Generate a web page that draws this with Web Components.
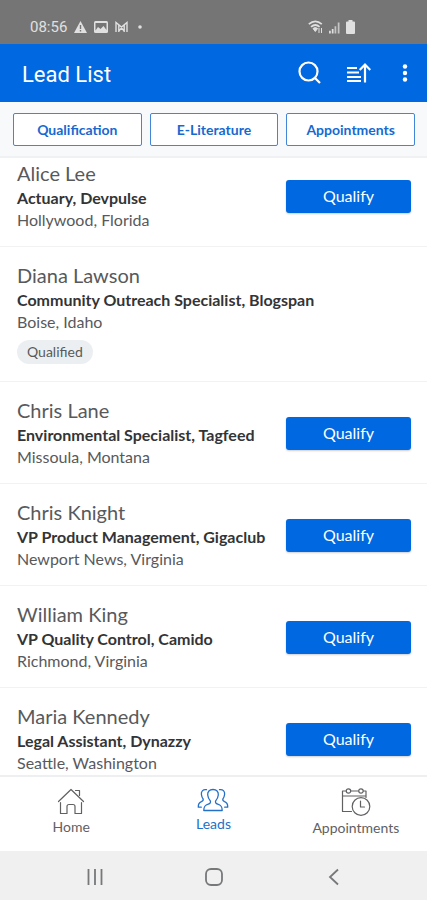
<!DOCTYPE html>
<html lang="en">
<head>
<meta charset="utf-8">
<meta name="viewport" content="width=device-width, initial-scale=1">
<title>Lead List</title>
<style>
html, body { margin: 0; height: 100%; }
body { font-family: Lato, "Open Sans", sans-serif; color: #58595b; background: #fff; --blue: #0068e0; }
</style>
</head>
<body>
<lead-app>
  <status-bar slot="top">08:56</status-bar>
  <app-bar slot="top">Lead List</app-bar>
  <filter-bar slot="top">
    <filter-button>Qualification</filter-button>
    <filter-button>E-Literature</filter-button>
    <filter-button>Appointments</filter-button>
  </filter-bar>
  <lead-list>
    <lead-row><span slot="name">Alice Lee</span><span slot="role">Actuary, Devpulse</span><span slot="place">Hollywood, Florida</span></lead-row>
    <lead-row qualified><span slot="name">Diana Lawson</span><span slot="role">Community Outreach Specialist, Blogspan</span><span slot="place">Boise, Idaho</span></lead-row>
    <lead-row><span slot="name">Chris Lane</span><span slot="role">Environmental Specialist, Tagfeed</span><span slot="place">Missoula, Montana</span></lead-row>
    <lead-row><span slot="name">Chris Knight</span><span slot="role">VP Product Management, Gigaclub</span><span slot="place">Newport News, Virginia</span></lead-row>
    <lead-row><span slot="name">William King</span><span slot="role">VP Quality Control, Camido</span><span slot="place">Richmond, Virginia</span></lead-row>
    <lead-row><span slot="name">Maria Kennedy</span><span slot="role">Legal Assistant, Dynazzy</span><span slot="place">Seattle, Washington</span></lead-row>
  </lead-list>
  <tab-bar slot="bottom">
    <tab-item href="#home">
      <svg slot="icon" width="28" height="27" viewBox="0 0 28 27" fill="none" stroke="currentColor" stroke-width="1.2" stroke-linejoin="round" stroke-linecap="round"><path d="M1.5 13.5 14 1.5l12.500 12M3.500 14.500V25.500h6.500v-7q0-2 2-2h4q2 0 2 2v7h6.500V14.500M18.500 2.500h4v5"/></svg>
      Home
    </tab-item>
    <tab-item href="#leads" active>
      <svg slot="icon" width="32" height="24" viewBox="0 0 32 24" fill="none" stroke="currentColor" stroke-width="1.300" stroke-linejoin="round" stroke-linecap="round"><path d="M16 1.500c-3.600 0-5.600 2.200-5.300 5.500.2 2.500 1.100 4 2.600 5.800.7 1.500-.2 2.700-2 3.300-3.300 1.100-4.500 2.400-4.500 6.400h18.400c0-4-1.200-5.300-4.500-6.400-1.800-.6-2.700-1.800-2-3.300 1.500-1.800 2.400-3.300 2.600-5.800.3-3.300-1.700-5.500-5.300-5.500z"/><path d="M9.500 1.700c-3.300-.6-5.600 1.500-5.100 4.800.2 1.900.7 2.900 1.700 4.400.5 1.300-.3 2-1.700 2.700-2.400 1-3.300 2.200-3.100 5.600h3M22.500 1.700c3.300-.6 5.600 1.500 5.100 4.800-.2 1.900-.7 2.900-1.700 4.400-.5 1.300.3 2 1.700 2.700 2.400 1 3.300 2.200 3.100 5.600h-3"/></svg>
      Leads
    </tab-item>
    <tab-item href="#appointments">
      <svg slot="icon" width="30" height="28" viewBox="0 0 30 28" fill="none" stroke="currentColor" stroke-width="1.200" stroke-linejoin="round" stroke-linecap="round"><path d="M10.500 23.500H1.500V3H5M10 3h7.500M22.500 3H25V9.500M1.500 8H25"/><circle cx="7.500" cy="3" r="2.200"/><circle cx="20" cy="3" r="2.200"/><circle cx="20" cy="18.500" r="8.800" fill="#fff"/><path d="M19.500 13v6h4"/></svg>
      Appointments
    </tab-item>
  </tab-bar>
  <system-bar slot="bottom"></system-bar>
</lead-app>
<script>
const define = (name, html, setup) => {
  const template = document.createElement('template');
  template.innerHTML = html;
  customElements.define(name, class extends HTMLElement {
    constructor() {
      super();
      this.attachShadow({ mode: 'open' }).append(template.content.cloneNode(true));
    }
    connectedCallback() { if (setup) setup(this, this.shadowRoot); }
  });
};

define('status-bar', `
<style>
:host { display: flex; justify-content: space-between; align-items: center; height: 44px; box-sizing: border-box; padding: 10px 72px 0 30px; background: #757575; color: #e0e0e0; font: 15px/20px Roboto, sans-serif; }
div { display: flex; align-items: center; gap: 7px; }
div + div { gap: 6px; }
svg { display: block; }
</style>
<div>
  <span><slot></slot></span>
  <svg width="13" height="12" viewBox="0 0 13 12"><path fill="currentColor" d="M6.500 0 13 12H0z"/><path stroke="#757575" stroke-width="1.400" d="M6.500 4v4M6.500 9v1.500"/></svg>
  <svg width="14" height="12" viewBox="0 0 14 12"><rect width="14" height="12" rx="1.500" fill="currentColor"/><path d="M1.500 9.500V2h11v7l-3-4-3 3L4 6z" fill="#757575"/></svg>
  <svg width="13" height="12" viewBox="0 0 13 12"><path d="M1 11V1.500L6.500 6 12 1.500V11M3.800 11V4M9.200 11V4M3.800 10l2.700-3 2.700 3" fill="none" stroke="currentColor" stroke-width="1.400"/></svg>
  <svg width="14" height="12" viewBox="0 0 14 12"><circle cx="5" cy="6" r="1.800" fill="currentColor"/></svg>
</div>
<div>
  <svg width="15" height="14" viewBox="0 0 15 14" fill="none" stroke="currentColor"><path stroke-width="1.700" d="M.8 4.200Q7.300-1.500 13.800 4.200M3 6.800q4.300-3.600 8.600 0"/><path d="M5 8.500q2.300-2 4.600 0L7.300 11.500z" fill="currentColor"/><path d="M11 8v5M13.500 8v5"/></svg>
  <svg width="11" height="13" viewBox="0 0 12 13" fill="none" stroke="currentColor" stroke-width="1.900"><path d="M1 13v-3M4 13V8"/><path d="M7 13V5M10.500 13V1" opacity=".75"/></svg>
  <svg width="9" height="14" viewBox="0 0 9 14"><path fill="currentColor" d="M2.500 0h4v1.500H8q1 0 1 1V13q0 1-1 1H1q-1 0-1-1V2.500q0-1 1-1h1.500z"/></svg>
</div>`);

define('app-bar', `
<style>
:host { display: flex; align-items: center; height: 58px; padding: 0 12px 0 22px; background: var(--blue); color: #fff; }
h1 { flex: 1; margin: 0; padding-top: 4px; font: 400 22px/28px Roboto, sans-serif; }
button { display: grid; place-items: center; padding: 0; border: 0; background: none; color: inherit; }
.actions { display: flex; align-items: center; gap: 24px; }
</style>
<h1><slot></slot></h1>
<div class="actions">
<button aria-label="Search"><svg width="24" height="24" viewBox="0 0 24 24" fill="none" stroke="currentColor" stroke-width="2.200"><circle cx="10.500" cy="10.500" r="9"/><path d="m17 17 5 5"/></svg></button>
<button aria-label="Sort"><svg width="25" height="22" viewBox="0 0 25 22" fill="none" stroke="currentColor" stroke-width="2.200"><path d="M1 6h10M1 10.500h12M1 15h14M1 19h14" stroke-width="1.900"/><path d="M19 20.500V3M13.700 8 19 2.500 24.300 8"/></svg></button>
<button aria-label="More options"><svg width="20" height="20" viewBox="0 0 20 20" fill="currentColor"><circle cx="10" cy="3.500" r="2.200"/><circle cx="10" cy="10" r="2.200"/><circle cx="10" cy="16.500" r="2.200"/></svg></button>
</div>`);

define('filter-bar', `
<style>
:host { display: grid; grid-template-columns: repeat(3, 1fr); gap: 8px; padding: 11px 12px 10px 13px; background: #f8f9fb; border-bottom: 2px solid #f0f1f2; }
</style><slot></slot>`);

define('filter-button', `
<style>
:host { display: block; }
button { display: block; width: 100%; height: 33px; padding: 0; border: 1px solid #4385d6; border-radius: 2px; background: #fff; color: #1769cf; font: 700 14px/20px Lato, sans-serif; }
</style><button><slot></slot></button>`);

define('lead-list', `
<style>
:host { display: block; min-height: 0; overflow-y: auto; scrollbar-width: none; }
</style><slot></slot>`, host => requestAnimationFrame(() => { host.scrollTop = 13; }));

define('lead-row', `
<style>
:host { display: flex; align-items: center; padding: 14px 16px 15px 17px; border-bottom: 1px solid #f2f2f3; }
.text { flex: 1; min-width: 0; }
.name { font-size: 20px; line-height: 28px; }
.role { font-size: 16px; line-height: 22px; font-weight: 700; color: #333436; white-space: nowrap; }
.place { font-size: 16px; line-height: 22px; }
.chip { display: table; margin: 7px 0 2px; padding: 0 10px; border-radius: 12px; background: #eceff1; font-size: 14px; line-height: 24px; }
button { width: 125px; height: 33px; margin: 2px 0 0; padding: 0; border: 0; border-radius: 3px; background: var(--blue); color: #fff; font: 400 16px/24px Lato, sans-serif; box-shadow: 0 1px 2px #0003; }
:host([qualified]) button, :host(:not([qualified])) .chip { display: none; }
</style>
<div class="text">
  <div class="name"><slot name="name"></slot></div>
  <div class="role"><slot name="role"></slot></div>
  <div class="place"><slot name="place"></slot></div>
  <div class="chip">Qualified</div>
</div>
<button>Qualify</button>`);

define('tab-bar', `
<style>
:host { display: grid; grid-template-columns: repeat(3, 1fr); height: 74px; border-top: 2px solid #eeeff0; background: #fff; }
</style><slot></slot>`);

define('tab-item', `
<style>
:host { display: block; }
a { display: flex; flex-direction: column; align-items: center; gap: 3px; padding-top: 11px; color: #606163; text-decoration: none; font-size: 14px; line-height: 18px; }
:host([active]) a { color: #2470c8; }
::slotted(svg) { display: block; }
</style>
<a><slot name="icon"></slot><span><slot></slot></span></a>`, (host, root) => {
  root.querySelector('a').setAttribute('href', host.getAttribute('href'));
});

define('system-bar', `
<style>
:host { display: grid; grid-template-columns: repeat(3, 1fr); height: 49px; padding: 0 34px; background: #f0f0f0; color: #77787a; }
button { display: grid; place-items: center; padding: 2px 0 0 2px; border: 0; background: none; color: inherit; }
svg { fill: none; stroke: currentColor; stroke-width: 1.800; }
</style>
<button aria-label="Recent apps"><svg width="18" height="18" viewBox="0 0 18 18"><path d="M2.500 1v16M9 1v16M15.500 1v16"/></svg></button>
<button aria-label="Home screen"><svg width="18" height="18" viewBox="0 0 18 18"><rect x="1" y="1" width="16" height="16" rx="5"/></svg></button>
<button aria-label="Back"><svg width="18" height="18" viewBox="0 0 18 18"><path d="M13 1.500 5 9l8 7.500"/></svg></button>`);

define('lead-app', `
<style>
:host { display: flex; flex-direction: column; height: 100vh; background: #fff; }
main { flex: 1; min-height: 0; display: grid; }
</style>
<header><slot name="top"></slot></header>
<main><slot></slot></main>
<footer><slot name="bottom"></slot></footer>`);
</script>
</body>
</html>
